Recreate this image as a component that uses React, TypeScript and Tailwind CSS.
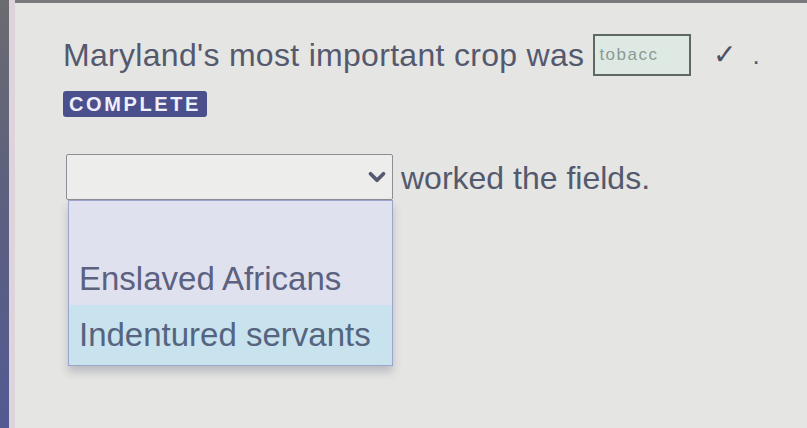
import { ChevronDown } from "lucide-react";

export default function App() {
  return (
    <div
      className="flex h-[428px] w-[807px] overflow-hidden bg-[#e5e5e3] text-[#54596e]"
      style={{ fontFamily: '"Liberation Sans", Arial, sans-serif' }}
    >
      {/* left frame edge */}
      <div className="flex h-full w-[15px] shrink-0">
        <div className="h-full w-[9px] bg-gradient-to-b from-[#6b6b70] via-[#5c5f80] to-[#535a92]" />
        <div className="h-full w-[6px] bg-[#dcd4da]" />
      </div>

      <div className="flex flex-1 flex-col">
        <div className="h-[3px] w-full bg-[#7a7a7c]" />

        <div className="flex flex-col pl-[48px] pt-[31px]">
          {/* sentence 1 */}
          <div className="flex items-center">
            <span className="text-[32px] leading-[42px] tracking-[0.3px]">
              Maryland's most important crop was
            </span>
            <div className="ml-[9px] flex h-[42px] w-[98px] items-center border-2 border-[#5f6864] bg-[#dfe9e4] pl-[4px]">
              <span className="text-[17px] tracking-[1.5px] text-[#8a9a95]">tobacc</span>
            </div>
            <span className="ml-[22px] text-[28px] text-[#4f5360]">✓</span>
            <span className="ml-[16px] text-[26px]">.</span>
          </div>

          {/* status badge */}
          <div className="mt-[15px] flex">
            <span className="rounded-[3px] bg-[#4b4f8c] px-[6px] py-[1px] text-[20px] font-bold leading-[24px] tracking-[2.6px] text-[#eef0fa]">
              COMPLETE
            </span>
          </div>

          {/* sentence 2 with open select */}
          <div className="ml-[3px] mt-[37px] flex items-start">
            <div className="flex flex-col">
              <div className="flex h-[46px] w-[327px] items-center justify-end rounded-[2px] border border-[#8d8f95] bg-[#ededeb] pr-[2px]">
                <ChevronDown className="h-[26px] w-[26px] text-[#555a70]" strokeWidth={3.5} />
              </div>
              <div className="ml-[2px] w-[325px] border border-[#9ca4c9] bg-[#dfe1ef] shadow-[0_6px_8px_rgba(90,95,120,0.3)]">
                <div className="h-[52px]" />
                <div className="flex h-[52px] items-center pl-[10px] text-[33px] text-[#5c6180]">
                  Enslaved Africans
                </div>
                <div className="flex h-[60px] items-center bg-[#c8e3ee] pl-[10px] text-[33px] text-[#55647f]">
                  Indentured servants
                </div>
              </div>
            </div>
            <span className="ml-[8px] mt-[2px] text-[32px] leading-[44px]">worked the fields.</span>
          </div>
        </div>
      </div>
    </div>
  );
}
